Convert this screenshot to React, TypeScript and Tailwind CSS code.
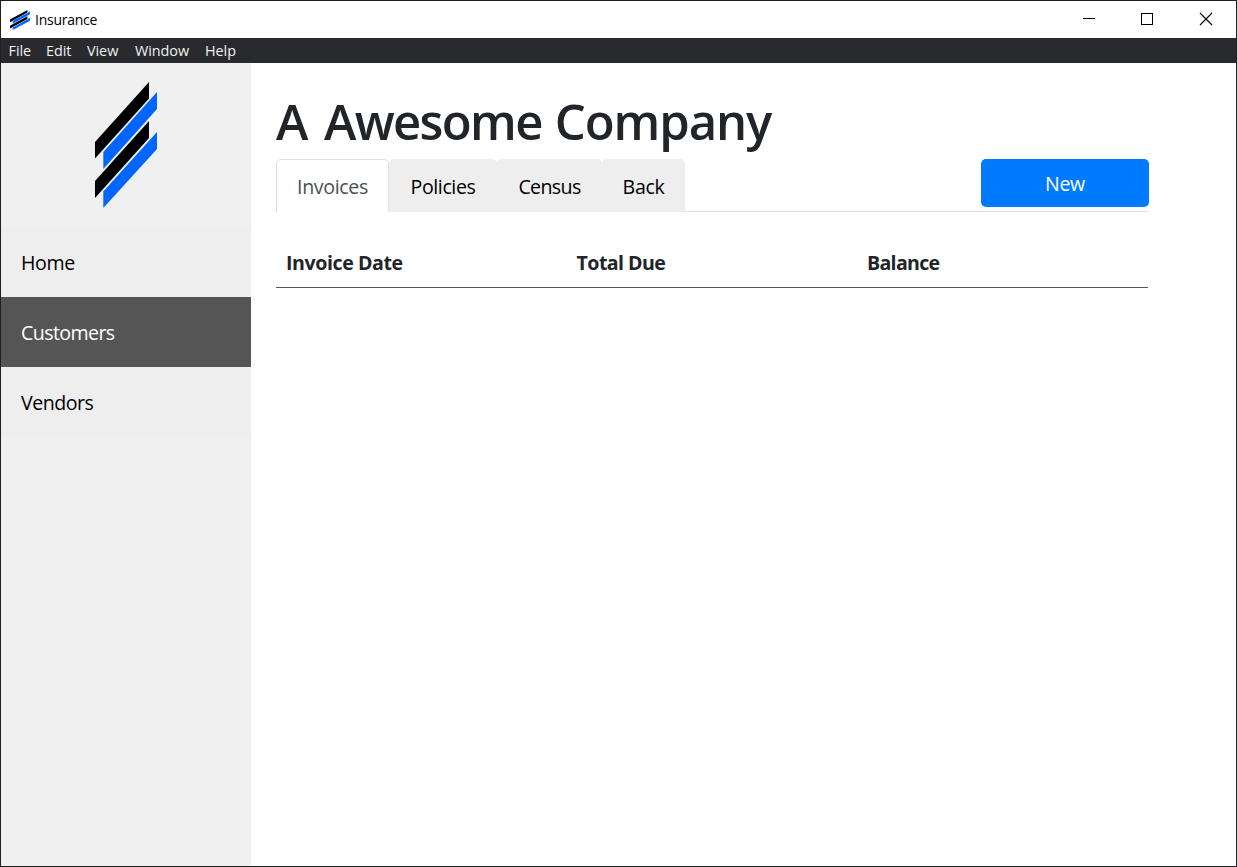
import React from "react";

const menu = [
  { label: "File", cls: "w-[37.5px]" },
  { label: "Edit", cls: "w-[41px]" },
  { label: "View", cls: "w-[48px]" },
  { label: "Window", cls: "w-[70px]" },
  { label: "Help", cls: "w-[40px]" },
];

const nav = [
  { label: "Home", cls: "bg-[#eeeeee] text-black tracking-[-0.4px]" },
  { label: "Customers", cls: "bg-[#555555] text-white tracking-[-0.6px]" },
  { label: "Vendors", cls: "bg-[#eeeeee] text-black tracking-[-0.5px]" },
];

const tabs = [
  { label: "Invoices", cls: "w-[113px] border border-b-0 border-[#dee2e6] bg-white text-[#495057] tracking-[-0.35px] pt-[2px]" },
  { label: "Policies", cls: "w-[108px] bg-[#eeeeee] text-black tracking-[-0.4px] pt-[3px]" },
  { label: "Census", cls: "w-[105px] bg-[#eeeeee] text-black tracking-[-0.65px] pt-[3px]" },
  { label: "Back", cls: "w-[83px] bg-[#eeeeee] text-black tracking-[-0.35px] pt-[3px]" },
];

function Logo({ className }: { className: string }) {
  return (
    <svg className={className} viewBox="0 0 62 126" preserveAspectRatio="none">
      <path d="M0 60 54 0V16.5L0 76.5Z" fill="#000" />
      <path d="M8.3 70 62 10V27L8.3 87Z" fill="#0066ff" />
      <path d="M0 99 54 39V56L0 116Z" fill="#000" />
      <path d="M8.3 109.5 62 50V67L8.3 126Z" fill="#0066ff" />
    </svg>
  );
}

export default function App() {
  return (
    <div className="flex h-[867px] w-[1237px] flex-col overflow-hidden border border-[#202024] bg-white font-['Segoe_UI','Open_Sans',sans-serif] text-[19.6px] text-[#212529]">
      <header className="flex h-[37px] shrink-0 items-center pl-[9px] text-black">
        <Logo className="h-[20px] w-[20px]" />
        <span className="ml-[5px] text-[14px] leading-[20px] tracking-[-0.25px]">Insurance</span>
        <svg className="ml-auto h-[37px] w-[175px]" viewBox="0 0 175 37" fill="none" stroke="#000" shapeRendering="crispEdges">
          <path d="M22 17.5H34" />
          <rect x="80.5" y="12.5" width="11" height="11" />
          <path d="M139 12 151 24M151 12 139 24" shapeRendering="auto" strokeWidth="1.1" />
        </svg>
      </header>
      <nav className="flex h-[25px] shrink-0 items-center bg-[#292a2d] pl-[7.5px] text-[14.4px] tracking-[-0.05px] text-[#f0f0f0]">
        {menu.map((m) => (
          <span key={m.label} className={m.cls}>{m.label}</span>
        ))}
      </nav>
      <div className="flex min-h-0 flex-1">
        <aside className="w-[250px] shrink-0 bg-[#f0f0f0]">
          <div className="flex h-[164px] justify-center pt-[19px]">
            <Logo className="h-[126px] w-[62px]" />
          </div>
          {nav.map((n) => (
            <div key={n.label} className={`flex h-[70px] items-center pl-[20px] pt-[2px] ${n.cls}`}>
              {n.label}
            </div>
          ))}
        </aside>
        <main className="w-[898px] pl-[25px] pt-[25px]">
          <h1 className="h-[71px] whitespace-nowrap text-[49px] font-semibold leading-[66px] tracking-[-1.1px]">
            <span className="mr-[5px]">A</span>{" "}
            <span className="mr-[1.5px] tracking-[-1.65px]">Awesome</span>{" "}
            <span>Company</span>
          </h1>
          <div className="flex h-[53px] border-b border-[#dee2e6]">
            {tabs.map((t) => (
              <div key={t.label} className={`flex h-[53px] shrink-0 items-center justify-center rounded-t-[5px] ${t.cls}`}>
                {t.label}
              </div>
            ))}
            <button className="ml-auto flex h-[48px] w-[168px] items-center justify-center rounded-[5px] bg-[#007bff] pt-[2px] tracking-[-0.3px] text-white">New</button>
          </div>
          <div className="mr-px mt-[26px] grid h-[50px] grid-cols-[290.5px_290.5px_1fr] items-center border-b border-[#555555] font-bold tracking-[-0.42px]">
            <span className="pl-[10px]">Invoice Date</span>
            <span className="pl-[10px] tracking-[-0.55px]">Total Due</span>
            <span className="pl-[10px] tracking-[-0.7px]">Balance</span>
          </div>
        </main>
      </div>
    </div>
  );
}
